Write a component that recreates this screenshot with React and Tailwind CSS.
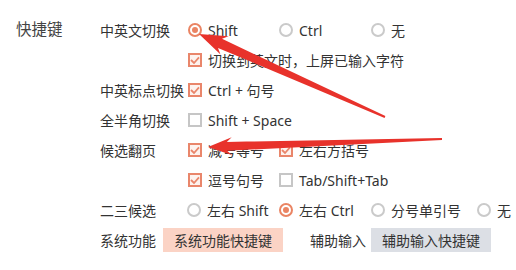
import React from "react";

function Radio({ checked }) {
  return checked ? (
    <span className="flex h-[14px] w-[14px] shrink-0 items-center justify-center rounded-full border-2 border-[#ea8463]">
      <span className="h-[6px] w-[6px] rounded-full bg-[#ea8463]" />
    </span>
  ) : (
    <span className="h-[14px] w-[14px] shrink-0 rounded-full border-2 border-[#cacaca]" />
  );
}

function Check({ checked }) {
  return checked ? (
    <span className="flex h-[14px] w-[14px] shrink-0 items-center justify-center border-2 border-[#e9866b] bg-[#fdf3ef]">
      <svg width="10" height="9" viewBox="0 0 10 9">
        <path d="M1 4 L4 7 L9 1.4" fill="none" stroke="#e9866b" strokeWidth="1.8" />
      </svg>
    </span>
  ) : (
    <span className="h-[14px] w-[14px] shrink-0 border-2 border-[#c6c6c6] bg-white" />
  );
}

function Opt({ kind, checked, children, w }) {
  return (
    <div className={`flex items-center gap-[6px] ${w}`}>
      {kind === "radio" ? <Radio checked={checked} /> : <Check checked={checked} />}
      <span className="whitespace-nowrap">{children}</span>
    </div>
  );
}

function Row({ label, children }) {
  return (
    <div className="flex h-[30px] items-center">
      <div className="w-[88px] shrink-0 whitespace-nowrap">{label}</div>
      <div className="flex items-center">{children}</div>
    </div>
  );
}

function arrowPoints(tx, ty, ex, ey, headLen, headHalf, w1, w2) {
  const dx = ex - tx;
  const dy = ey - ty;
  const L = Math.hypot(dx, dy);
  const ux = dx / L;
  const uy = dy / L;
  const nx = -uy;
  const ny = ux;
  const bx = tx + ux * headLen;
  const by = ty + uy * headLen;
  const bx2 = tx + ux * (headLen - 5);
  const by2 = ty + uy * (headLen - 5);
  const p = [
    [tx, ty],
    [bx + nx * headHalf, by + ny * headHalf],
    [bx2 + nx * (w1 / 2), by2 + ny * (w1 / 2)],
    [ex + nx * (w2 / 2), ey + ny * (w2 / 2)],
    [ex - nx * (w2 / 2), ey - ny * (w2 / 2)],
    [bx2 - nx * (w1 / 2), by2 - ny * (w1 / 2)],
    [bx - nx * headHalf, by - ny * headHalf],
  ];
  return p.map((q) => q.map((v) => v.toFixed(1)).join(",")).join(" ");
}

export default function App() {
  return (
    <div
      className="relative h-[270px] w-[516px] overflow-hidden bg-white text-[14px] text-[#333]"
      style={{ fontFamily: '"Noto Sans", "Noto Sans CJK SC", sans-serif' }}
    >
      <div className="flex pt-[15px]">
        <div className="flex h-[30px] w-[100px] shrink-0 items-center pl-[16px] text-[15.5px] text-[#444]">
          快捷键
        </div>
        <div className="flex flex-col">
          <Row label="中英文切换">
            <Opt kind="radio" checked w="w-[91px]">Shift</Opt>
            <Opt kind="radio" w="w-[92px]">Ctrl</Opt>
            <Opt kind="radio">无</Opt>
          </Row>
          <Row label="">
            <Opt kind="check" checked>切换到英文时，上屏已输入字符</Opt>
          </Row>
          <Row label="中英标点切换">
            <Opt kind="check" checked>Ctrl + 句号</Opt>
          </Row>
          <Row label="全半角切换">
            <Opt kind="check">Shift + Space</Opt>
          </Row>
          <Row label="候选翻页">
            <Opt kind="check" checked w="w-[91px]">减号等号</Opt>
            <Opt kind="check" checked>左右方括号</Opt>
          </Row>
          <Row label="">
            <Opt kind="check" checked w="w-[91px]">逗号句号</Opt>
            <Opt kind="check">Tab/Shift+Tab</Opt>
          </Row>
          <Row label="二三候选">
            <div className="-ml-[1px] flex items-center">
              <Opt kind="radio" w="w-[92px]">左右 Shift</Opt>
              <Opt kind="radio" checked w="w-[92px]">左右 Ctrl</Opt>
              <Opt kind="radio" w="w-[106px]">分号单引号</Opt>
              <Opt kind="radio">无</Opt>
            </div>
          </Row>
          <div className="flex h-[30px] items-center">
            <div className="w-[63px] shrink-0 whitespace-nowrap">系统功能</div>
            <div className="flex h-[24px] w-[120px] items-center justify-center bg-[#fbd3c5]">
              系统功能快捷键
            </div>
            <div className="w-[88px] shrink-0 whitespace-nowrap pl-[27px]">辅助输入</div>
            <div className="flex h-[24px] w-[120px] items-center justify-center bg-[#dcdfe5]">
              辅助输入快捷键
            </div>
          </div>
        </div>
      </div>

      <svg
        className="pointer-events-none absolute left-0 top-0"
        width="516"
        height="270"
        viewBox="0 0 516 270"
      >
        <polygon points={arrowPoints(199, 34, 385, 117, 28, 10, 10, 2)} fill="#e8322b" />
        <polygon points={arrowPoints(208, 147, 442, 139, 24, 9, 9, 2)} fill="#e8322b" />
      </svg>
    </div>
  );
}
